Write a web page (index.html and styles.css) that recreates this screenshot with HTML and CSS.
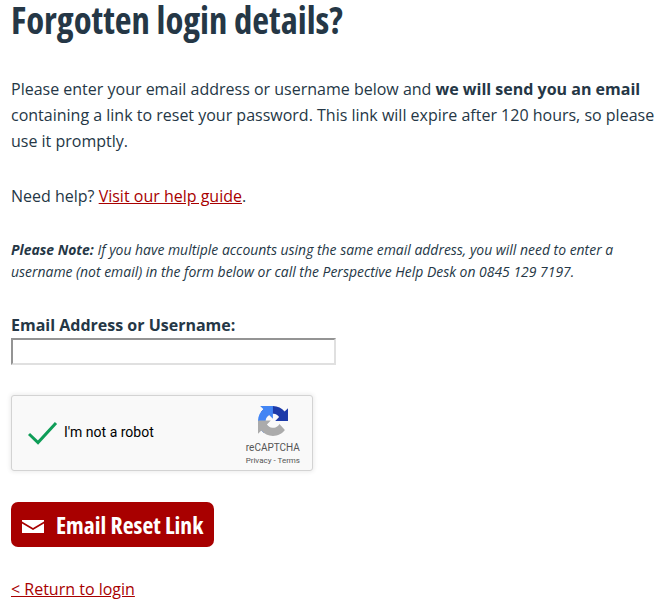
FILE: index.html
```html
<!DOCTYPE html>
<html>
<head>
	<meta charset="utf-8">
	<link rel="stylesheet" href="styles.css">
	<title>Forgotten login details?</title>
</head>
<body>
	<h1>Forgotten login details?</h1>

	<p class="intro">Please enter your email address or username below and <strong>we will send you an email</strong> containing a link to reset your password. This link will expire after 120 hours, so please use it promptly.</p>

	<p class="help">Need help? <a href="#">Visit our help guide</a>.</p>

	<p class="note"><strong>Please Note:</strong> If you have multiple accounts using the same email address, you will need to enter a username (not email) in the form below or call the Perspective Help Desk on 0845 129 7197.</p>

	<form>
		<label for="username">Email Address or Username:</label>
		<input type="text" id="username" class="field">

		<div class="captcha">
			<svg class="tick" width="30" height="24" viewBox="0 0 30 24">
				<path d="M1 13 L10 21.500 L28 2" fill="none" stroke="#0f9d58" stroke-width="3"/>
			</svg>
			<span class="captcha-label">I'm not a robot</span>
			<div class="captcha-brand">
				<svg width="30" height="30" viewBox="0 0 64 64">
					<path d="M64 31.955l-.033-1.37V4.687l-7.16 7.16C50.948 4.674 42.033.093 32.05.093c-10.4 0-19.622 4.96-25.458 12.64l11.736 11.86a15.55 15.55 0 0 1 4.754-5.334c2.05-1.6 4.952-2.906 8.968-2.906.485 0 .86.057 1.135.163 4.976.393 9.288 3.14 11.828 7.124l-8.307 8.307 26.2.004" fill="#1c3aa9"/>
					<path d="M31.862.001l-1.37.033H4.594l7.16 7.16C4.58 13.053 0 21.968 0 31.95c0 10.4 4.96 19.622 12.64 25.458l11.86-11.736a15.55 15.55 0 0 1-5.334-4.754c-1.6-2.05-2.906-4.952-2.906-8.968 0-.485.057-.86.163-1.135.393-4.976 3.14-9.288 7.124-11.828l8.307 8.307L31.862.001" fill="#4285f4"/>
					<path d="M0 31.955l.033 1.37v25.9l7.16-7.16c5.86 7.173 14.774 11.754 24.757 11.754 10.4 0 19.622-4.96 25.458-12.64L45.672 38.32a15.55 15.55 0 0 1-4.754 5.334c-2.05 1.6-4.952 2.906-8.968 2.906-.485 0-.86-.057-1.135-.163-4.976-.393-9.288-3.14-11.828-7.124l8.307-8.307-26.2.004" fill="#ababab"/>
				</svg>
				<span class="captcha-name">reCAPTCHA</span>
				<span class="captcha-links">Privacy - Terms</span>
			</div>
		</div>

		<button type="button" class="button">
			<svg class="envelope" width="22" height="13" viewBox="0 0 22 13">
				<path d="M0 0 H22 V1.500 L11 8 L0 1.500 Z M0 3.500 L11 10 L22 3.500 V13 H0 Z" fill="#fff"/>
			</svg>
			Email Reset Link
		</button>
	</form>

	<p class="back"><a href="#">&lt; Return to login</a></p>
</body>
</html>
```

FILE: styles.css
```css
body {
	margin: 0;
	padding: 0 0 0 11px;
	overflow: hidden;
	font-family: "Open Sans", sans-serif;
	font-size: 16px;
	line-height: 26px;
	color: #253746;
	background-color: #fff;
}

h1 {
	margin: 0 0 35px;
	font-size: 36.7px;
	line-height: 41px;
	font-weight: 700;
	font-stretch: 75%;
}

p {
	margin: 0;
}

a {
	color: #a80000;
}

.intro {
	margin-bottom: 29px;
}

.help {
	margin-bottom: 30px;
}

.note {
	margin-bottom: 29px;
	font-size: 13.95px;
	font-style: italic;
	line-height: 22px;
}

label {
	display: block;
	font-weight: 700;
	line-height: 26px;
}

.field {
	display: block;
	box-sizing: border-box;
	width: 325px;
	height: 27px;
	margin: 0 0 30px;
	padding: 0;
	border-width: 2px;
	border-style: solid;
	border-color: #949494 #e0e0e0 #e0e0e0 #949494;
	background-color: #fff;
}

.captcha {
	display: flex;
	align-items: center;
	box-sizing: border-box;
	width: 302px;
	height: 76px;
	margin-bottom: 31px;
	border: 1px solid #d3d3d3;
	border-radius: 3px;
	background-color: #f9f9f9;
	box-shadow: 0 0 4px 1px rgba(0, 0, 0, 0.08);
	font-family: Roboto, sans-serif;
	color: #000;
}

.tick {
	margin-left: 16px;
	margin-right: 6px;
}

.captcha-label {
	margin-bottom: 2px;
	font-size: 14px;
}

.captcha-brand {
	display: flex;
	flex-direction: column;
	align-items: center;
	margin-top: 5px;
	margin-left: auto;
	margin-right: 12px;
	color: #555;
}

.captcha-name {
	margin-top: 5px;
	font-size: 10px;
	line-height: 14px;
}

.captcha-links {
	font-size: 8px;
	line-height: 11px;
}

.button {
	display: flex;
	align-items: center;
	gap: 12px;
	width: 203px;
	height: 45px;
	padding: 0 0 0 11px;
	border: 0;
	border-radius: 7px;
	background-color: #a80000;
	color: #fff;
	font-family: "Open Sans", sans-serif;
	font-size: 23.7px;
	font-weight: 700;
	font-stretch: 75%;
}

.envelope {
	margin-top: 3px;
}

.back {
	margin-top: 29px;
}
```
